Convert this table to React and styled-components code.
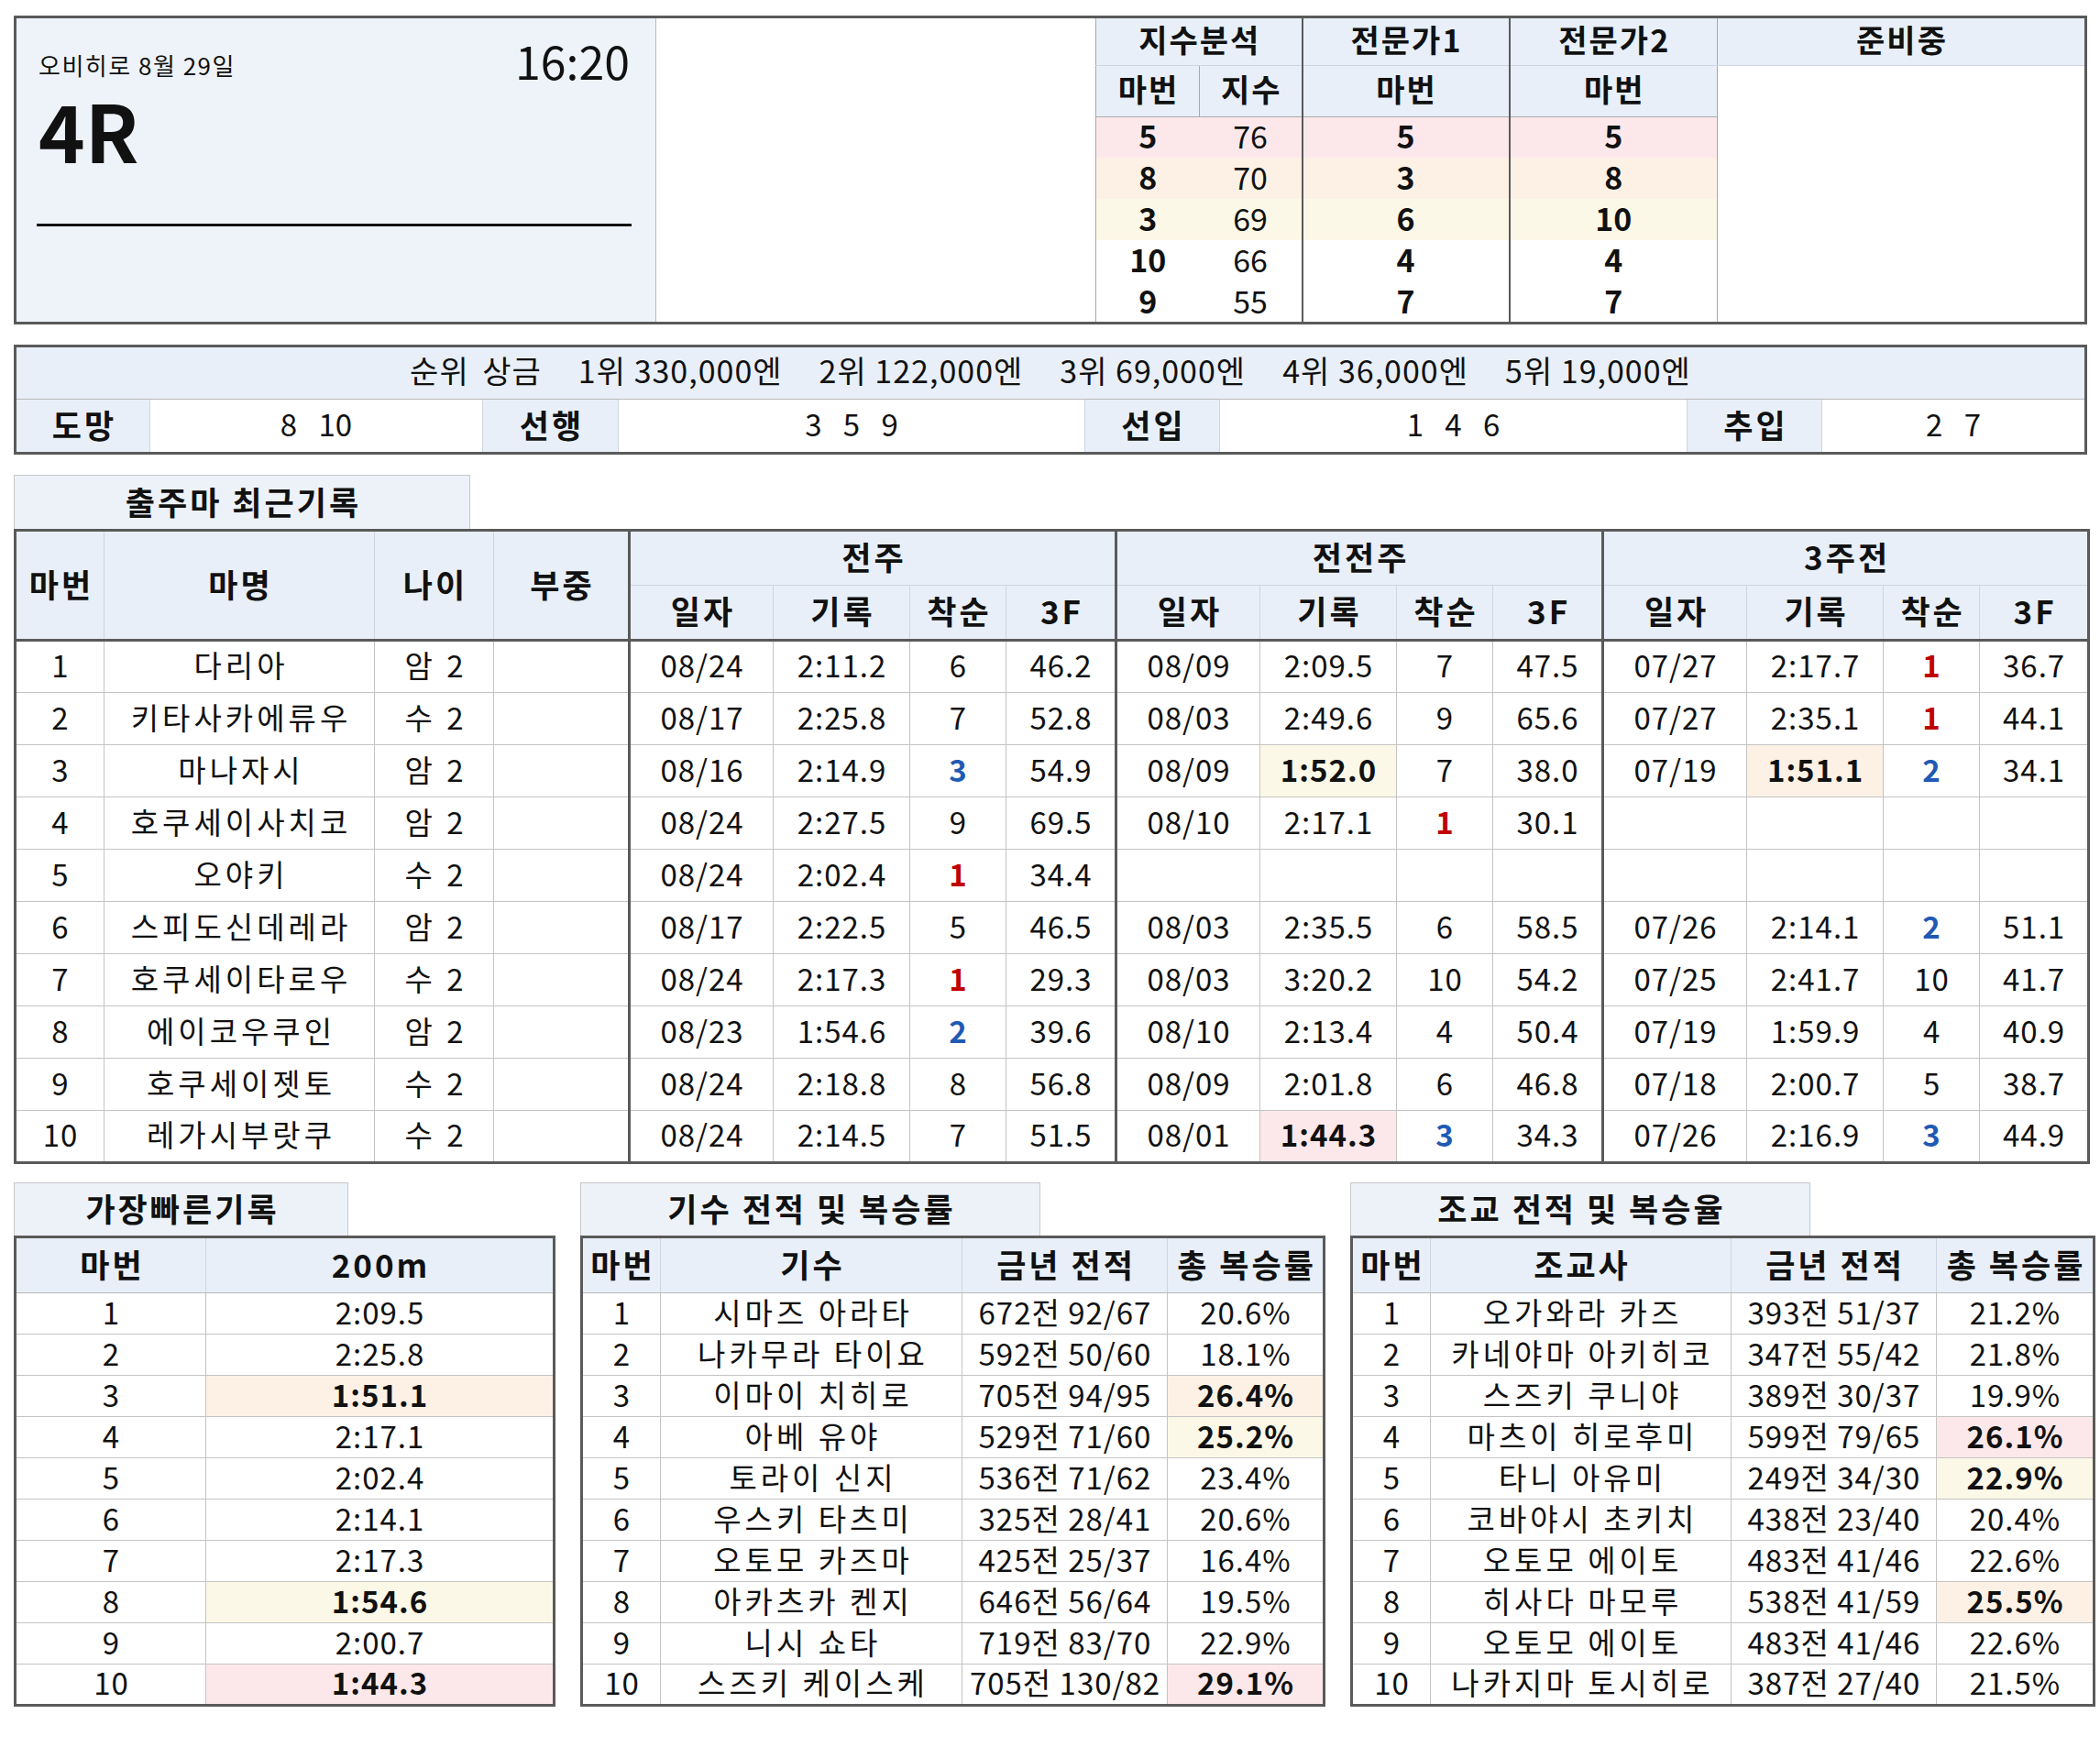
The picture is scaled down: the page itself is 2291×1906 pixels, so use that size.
import React from 'react';
import styled, { createGlobalStyle } from 'styled-components';

const DARK = '#5a5a5a';
const GRID = '#c4c4c4';
const HEAD_LINE = '#ccd5e1';
const HEAD_BG = '#e8eff8';
const HL = { pink: '#fce8ea', peach: '#fdf1e5', yellow: '#fcf8e7' };

const GlobalStyle = createGlobalStyle`
  body {
    margin: 0;
    background: #ffffff;
    color: #111111;
    font-family: 'Noto Sans CJK KR', 'Noto Sans', sans-serif;
  }
`;

const Page = styled.div`
  width: 2291px;
  box-sizing: border-box;
  padding: 17px 14px 40px 15px;
  display: flex;
  flex-direction: column;
`;

/* ---------- top box ---------- */

const TopBox = styled.div`
  display: flex;
  align-items: flex-start;
  height: 337px;
  border: 3px solid ${DARK};
  box-sizing: border-box;
  overflow: hidden;
`;

const InfoPanel = styled.div`
  width: 698px;
  height: 100%;
  flex-shrink: 0;
  box-sizing: border-box;
  background: #eef3f9;
  border-right: 1px solid #b9b9b9;
  padding: 20px 28px 0 24px;
  display: flex;
  flex-direction: column;
`;

const MetaRow = styled.div`
  display: flex;
  justify-content: space-between;
  align-items: flex-end;
`;

const Venue = styled.div`
  font-size: 26px;
  letter-spacing: 1.5px;
  line-height: 1;
  margin-bottom: 6px;
`;

const Time = styled.div`
  font-size: 50px;
  line-height: 1;
`;

const RaceNo = styled.div`
  font-size: 86px;
  font-weight: 700;
  line-height: 1;
  margin-top: 8px;
`;

const Rule = styled.div`
  height: 3px;
  background: #111111;
  margin: 60px -2px 0 -2px;
`;

const Blank = styled.div`
  width: 479px;
  height: 100%;
  flex-shrink: 0;
  background: #ffffff;
`;

const IndexTable = styled.table`
  flex: 1;
  border-collapse: collapse;
  table-layout: fixed;
`;

const Col = styled.col`
  width: ${(p) => p.$w}px;
`;

const IxHead = styled.th`
  background: ${HEAD_BG};
  font-size: 34px;
  font-weight: 700;
  letter-spacing: 2px;
  line-height: 1;
  height: ${(p) => p.$h}px;
  padding: 0 0 4px 2px;
  box-sizing: border-box;
  border-left: ${(p) => (p.$dark ? `2px solid ${DARK}` : `1px solid #a9a9a9`)};
  border-bottom: 1px solid ${(p) => (p.$sub ? '#a9a9a9' : HEAD_LINE)};
`;

const IxRow = styled.tr`
  height: 45px;
  background: ${(p) => (p.$hl ? HL[p.$hl] : '#ffffff')};
`;

const IxCell = styled.td`
  text-align: center;
  font-size: 34px;
  font-weight: ${(p) => (p.$bold ? 700 : 400)};
  padding: 0 0 3px 0;
  line-height: 1;
  border-left: ${(p) => (p.$dark ? `2px solid ${DARK}` : p.$line ? '1px solid #a9a9a9' : 'none')};
`;

const Pending = styled.td`
  background: #ffffff;
  border-left: 1px solid #a9a9a9;
`;

/* ---------- prize / style box ---------- */

const PrizeBox = styled.div`
  margin-top: 22px;
  border: 3px solid ${DARK};
  display: flex;
  flex-direction: column;
`;

const PrizeRow = styled.div`
  height: 57px;
  box-sizing: border-box;
  padding-bottom: 8px;
  background: ${HEAD_BG};
  border-bottom: 1px solid #b9b9b9;
  display: flex;
  justify-content: center;
  align-items: center;
  gap: 40px;
  font-size: 34px;
  letter-spacing: 1px;
`;

const PrizeItem = styled.span`
  word-spacing: ${(p) => (p.$lead ? 6 : 0)}px;
`;

const StyleRow = styled.div`
  height: 57px;
  display: grid;
  grid-template-columns: 145px 363px 148px 509px 147px 510px 147px 1fr;
`;

const StyleLabel = styled.div`
  background: ${HEAD_BG};
  font-size: 35px;
  font-weight: 700;
  letter-spacing: 3px;
  padding: 0 0 5px 3px;
  display: flex;
  align-items: center;
  justify-content: center;
  border-left: ${(p) => (p.$first ? 'none' : `1px solid ${HEAD_LINE}`)};
`;

const StyleValue = styled.div`
  background: #ffffff;
  font-size: 33px;
  word-spacing: 16px;
  padding-bottom: 5px;
  display: flex;
  align-items: center;
  justify-content: center;
  border-left: 1px solid ${HEAD_LINE};
`;

/* ---------- section tabs & tables ---------- */

const Tab = styled.div`
  width: ${(p) => p.$w}px;
  height: ${(p) => p.$h}px;
  box-sizing: border-box;
  padding: 0 0 4px 3px;
  background: #edf2f9;
  border: 1px solid #c8c8c8;
  border-bottom: none;
  display: flex;
  align-items: center;
  justify-content: center;
  font-size: 35px;
  font-weight: 700;
  letter-spacing: 3px;
`;

const SectionTop = styled.div`
  margin-top: 22px;
  display: flex;
  flex-direction: column;
`;

const DataTable = styled.table`
  width: ${(p) => p.$w}px;
  border-collapse: collapse;
  table-layout: fixed;
  border: 3px solid ${DARK};
`;

const HeadRow = styled.tr`
  height: ${(p) => p.$h}px;
`;

const HeadCell = styled.th`
  background: ${HEAD_BG};
  font-size: 35px;
  font-weight: 700;
  letter-spacing: 3px;
  line-height: 1.2;
  padding: 0 0 4px 3px;
  white-space: nowrap;
  border-left: ${(p) => (p.$sep ? `3px solid ${DARK}` : `1px solid ${HEAD_LINE}`)};
  border-bottom: ${(p) => (p.$under ? p.$under : `1px solid ${HEAD_LINE}`)};
`;

const BodyRow = styled.tr`
  height: ${(p) => p.$h}px;
`;

const BodyCell = styled.td`
  text-align: center;
  font-size: 33px;
  line-height: 1;
  letter-spacing: ${(p) => (p.$wide ? 4 : 1)}px;
  padding: 0 0 4px ${(p) => (p.$wide ? 4 : 1)}px;
  white-space: nowrap;
  font-weight: ${(p) => (p.$bold ? 700 : 400)};
  color: ${(p) => p.$color || '#111111'};
  background: ${(p) => (p.$hl ? HL[p.$hl] : '#ffffff')};
  border-left: ${(p) => (p.$sep ? `3px solid ${DARK}` : `1px solid ${GRID}`)};
  border-top: 1px solid ${GRID};
`;

const BottomRow = styled.div`
  margin-top: 20px;
  display: flex;
  gap: 27px;
`;

const Block = styled.div`
  display: flex;
  flex-direction: column;
`;

/* ---------- data ---------- */

const indexRows = [
  { v: ['5', '76', '5', '5'], hl: 'pink' },
  { v: ['8', '70', '3', '8'], hl: 'peach' },
  { v: ['3', '69', '6', '10'], hl: 'yellow' },
  { v: ['10', '66', '4', '4'] },
  { v: ['9', '55', '7', '7'] },
];

const prizes = ['순위 상금', '1위 330,000엔', '2위 122,000엔', '3위 69,000엔', '4위 36,000엔', '5위 19,000엔'];

const styles = [
  ['도망', '8 10'],
  ['선행', '3 5 9'],
  ['선입', '1 4 6'],
  ['추입', '2 7'],
];

// [일자, 기록, 착순, 3F, 기록 강조색]
const horses = [
  { no: 1, name: '다리아', age: '암 2', w: [['08/24', '2:11.2', '6', '46.2'], ['08/09', '2:09.5', '7', '47.5'], ['07/27', '2:17.7', '1', '36.7']] },
  { no: 2, name: '키타사카에류우', age: '수 2', w: [['08/17', '2:25.8', '7', '52.8'], ['08/03', '2:49.6', '9', '65.6'], ['07/27', '2:35.1', '1', '44.1']] },
  { no: 3, name: '마나자시', age: '암 2', w: [['08/16', '2:14.9', '3', '54.9'], ['08/09', '1:52.0', '7', '38.0', 'yellow'], ['07/19', '1:51.1', '2', '34.1', 'peach']] },
  { no: 4, name: '호쿠세이사치코', age: '암 2', w: [['08/24', '2:27.5', '9', '69.5'], ['08/10', '2:17.1', '1', '30.1'], null] },
  { no: 5, name: '오야키', age: '수 2', w: [['08/24', '2:02.4', '1', '34.4'], null, null] },
  { no: 6, name: '스피도신데레라', age: '암 2', w: [['08/17', '2:22.5', '5', '46.5'], ['08/03', '2:35.5', '6', '58.5'], ['07/26', '2:14.1', '2', '51.1']] },
  { no: 7, name: '호쿠세이타로우', age: '수 2', w: [['08/24', '2:17.3', '1', '29.3'], ['08/03', '3:20.2', '10', '54.2'], ['07/25', '2:41.7', '10', '41.7']] },
  { no: 8, name: '에이코우쿠인', age: '암 2', w: [['08/23', '1:54.6', '2', '39.6'], ['08/10', '2:13.4', '4', '50.4'], ['07/19', '1:59.9', '4', '40.9']] },
  { no: 9, name: '호쿠세이젯토', age: '수 2', w: [['08/24', '2:18.8', '8', '56.8'], ['08/09', '2:01.8', '6', '46.8'], ['07/18', '2:00.7', '5', '38.7']] },
  { no: 10, name: '레가시부랏쿠', age: '수 2', w: [['08/24', '2:14.5', '7', '51.5'], ['08/01', '1:44.3', '3', '34.3', 'pink'], ['07/26', '2:16.9', '3', '44.9']] },
];

const fastest = [
  ['2:09.5'], ['2:25.8'], ['1:51.1', 'peach'], ['2:17.1'], ['2:02.4'],
  ['2:14.1'], ['2:17.3'], ['1:54.6', 'yellow'], ['2:00.7'], ['1:44.3', 'pink'],
];

const jockeys = [
  ['시마즈 아라타', '672전 92/67', '20.6%'],
  ['나카무라 타이요', '592전 50/60', '18.1%'],
  ['이마이 치히로', '705전 94/95', '26.4%', 'peach'],
  ['아베 유야', '529전 71/60', '25.2%', 'yellow'],
  ['토라이 신지', '536전 71/62', '23.4%'],
  ['우스키 타츠미', '325전 28/41', '20.6%'],
  ['오토모 카즈마', '425전 25/37', '16.4%'],
  ['아카츠카 켄지', '646전 56/64', '19.5%'],
  ['니시 쇼타', '719전 83/70', '22.9%'],
  ['스즈키 케이스케', '705전 130/82', '29.1%', 'pink'],
];

const trainers = [
  ['오가와라 카즈', '393전 51/37', '21.2%'],
  ['카네야마 아키히코', '347전 55/42', '21.8%'],
  ['스즈키 쿠니야', '389전 30/37', '19.9%'],
  ['마츠이 히로후미', '599전 79/65', '26.1%', 'pink'],
  ['타니 아유미', '249전 34/30', '22.9%', 'yellow'],
  ['코바야시 초키치', '438전 23/40', '20.4%'],
  ['오토모 에이토', '483전 41/46', '22.6%'],
  ['히사다 마모루', '538전 41/59', '25.5%', 'peach'],
  ['오토모 에이토', '483전 41/46', '22.6%'],
  ['나카지마 토시히로', '387전 27/40', '21.5%'],
];

const rankColor = (r) => (r === '1' ? '#c00000' : r === '2' || r === '3' ? '#1f5ab4' : undefined);

const WeekCells = ({ week }) => {
  if (!week) {
    return (
      <>
        <BodyCell $sep />
        <BodyCell />
        <BodyCell />
        <BodyCell />
      </>
    );
  }
  const [date, time, rank, f3, hl] = week;
  const color = rankColor(rank);
  return (
    <>
      <BodyCell $sep>{date}</BodyCell>
      <BodyCell $hl={hl} $bold={!!hl}>{time}</BodyCell>
      <BodyCell $color={color} $bold={!!color}>{rank}</BodyCell>
      <BodyCell>{f3}</BodyCell>
    </>
  );
};

const UNDER = `3px solid ${DARK}`;

const RecordTable = () => (
  <DataTable $w={2262}>
    <colgroup>
      <Col $w={97} />
      <Col $w={295} />
      <Col $w={130} />
      <Col $w={148} />
      {[0, 1, 2].map((g) => (
        <React.Fragment key={g}>
          <Col $w={157} />
          <Col $w={149} />
          <Col $w={105} />
          <Col $w={g === 2 ? 119 : 120} />
        </React.Fragment>
      ))}
    </colgroup>
    <thead>
      <HeadRow $h={60}>
        <HeadCell rowSpan={2} $under={UNDER}>마번</HeadCell>
        <HeadCell rowSpan={2} $under={UNDER}>마명</HeadCell>
        <HeadCell rowSpan={2} $under={UNDER}>나이</HeadCell>
        <HeadCell rowSpan={2} $under={UNDER}>부중</HeadCell>
        <HeadCell colSpan={4} $sep>전주</HeadCell>
        <HeadCell colSpan={4} $sep>전전주</HeadCell>
        <HeadCell colSpan={4} $sep>3주전</HeadCell>
      </HeadRow>
      <HeadRow $h={60}>
        {[0, 1, 2].map((g) => (
          <React.Fragment key={g}>
            <HeadCell $sep $under={UNDER}>일자</HeadCell>
            <HeadCell $under={UNDER}>기록</HeadCell>
            <HeadCell $under={UNDER}>착순</HeadCell>
            <HeadCell $under={UNDER}>3F</HeadCell>
          </React.Fragment>
        ))}
      </HeadRow>
    </thead>
    <tbody>
      {horses.map((h) => (
        <BodyRow key={h.no} $h={57}>
          <BodyCell>{h.no}</BodyCell>
          <BodyCell $wide>{h.name}</BodyCell>
          <BodyCell $wide>{h.age}</BodyCell>
          <BodyCell />
          {h.w.map((wk, i) => (
            <WeekCells key={i} week={wk} />
          ))}
        </BodyRow>
      ))}
    </tbody>
  </DataTable>
);

const StatTable = ({ width, cols, heads, rows }) => (
  <DataTable $w={width}>
    <colgroup>
      {cols.map((c, i) => (
        <Col key={i} $w={c} />
      ))}
    </colgroup>
    <thead>
      <HeadRow $h={61}>
        {heads.map((t) => (
          <HeadCell key={t} $under="1px solid #b9b9b9">{t}</HeadCell>
        ))}
      </HeadRow>
    </thead>
    <tbody>
      {rows.map((r, i) => (
        <BodyRow key={i} $h={45}>
          <BodyCell>{i + 1}</BodyCell>
          {r.cells.map((c, j) => {
            const last = j === r.cells.length - 1;
            return (
              <BodyCell
                key={j}
                $wide={r.cells.length > 1 && j === 0}
                $hl={last ? r.hl : undefined}
                $bold={last && !!r.hl}
              >
                {c}
              </BodyCell>
            );
          })}
        </BodyRow>
      ))}
    </tbody>
  </DataTable>
);

export default function App() {
  return (
    <>
      <GlobalStyle />
      <Page>
        <TopBox>
          <InfoPanel>
            <MetaRow>
              <Venue>오비히로 8월 29일</Venue>
              <Time>16:20</Time>
            </MetaRow>
            <RaceNo>4R</RaceNo>
            <Rule />
          </InfoPanel>
          <Blank />
          <IndexTable>
            <colgroup>
              <Col $w={113} />
              <Col $w={112} />
              <Col $w={226} />
              <Col $w={227} />
              <col />
            </colgroup>
            <tbody>
              <tr>
                <IxHead colSpan={2} $h={51}>지수분석</IxHead>
                <IxHead $dark $h={51}>전문가1</IxHead>
                <IxHead $dark $h={51}>전문가2</IxHead>
                <IxHead $h={51}>준비중</IxHead>
              </tr>
              <tr>
                <IxHead $sub $h={56}>마번</IxHead>
                <IxHead $sub $h={56}>지수</IxHead>
                <IxHead $sub $dark $h={56}>마번</IxHead>
                <IxHead $sub $dark $h={56}>마번</IxHead>
                <Pending rowSpan={6} />
              </tr>
              {indexRows.map((r, i) => (
                <IxRow key={i} $hl={r.hl}>
                  <IxCell $bold $line>{r.v[0]}</IxCell>
                  <IxCell>{r.v[1]}</IxCell>
                  <IxCell $bold $dark>{r.v[2]}</IxCell>
                  <IxCell $bold $dark>{r.v[3]}</IxCell>
                </IxRow>
              ))}
            </tbody>
          </IndexTable>
        </TopBox>

        <PrizeBox>
          <PrizeRow>
            {prizes.map((p, i) => (
              <PrizeItem key={p} $lead={i === 0}>{p}</PrizeItem>
            ))}
          </PrizeRow>
          <StyleRow>
            {styles.map(([label, value], i) => (
              <React.Fragment key={label}>
                <StyleLabel $first={i === 0}>{label}</StyleLabel>
                <StyleValue>{value}</StyleValue>
              </React.Fragment>
            ))}
          </StyleRow>
        </PrizeBox>

        <SectionTop>
          <Tab $w={498} $h={59}>출주마 최근기록</Tab>
          <RecordTable />
        </SectionTop>

        <BottomRow>
          <Block>
            <Tab $w={365} $h={58}>가장빠른기록</Tab>
            <StatTable
              width={588}
              cols={[208, 380]}
              heads={['마번', '200m']}
              rows={fastest.map(([t, hl]) => ({ cells: [t], hl }))}
            />
          </Block>
          <Block>
            <Tab $w={502} $h={58}>기수 전적 및 복승률</Tab>
            <StatTable
              width={810}
              cols={[86, 329, 224, 171]}
              heads={['마번', '기수', '금년 전적', '총 복승률']}
              rows={jockeys.map(([a, b, c, hl]) => ({ cells: [a, b, c], hl }))}
            />
          </Block>
          <Block>
            <Tab $w={502} $h={58}>조교 전적 및 복승율</Tab>
            <StatTable
              width={810}
              cols={[86, 328, 224, 172]}
              heads={['마번', '조교사', '금년 전적', '총 복승률']}
              rows={trainers.map(([a, b, c, hl]) => ({ cells: [a, b, c], hl }))}
            />
          </Block>
        </BottomRow>
      </Page>
    </>
  );
}
